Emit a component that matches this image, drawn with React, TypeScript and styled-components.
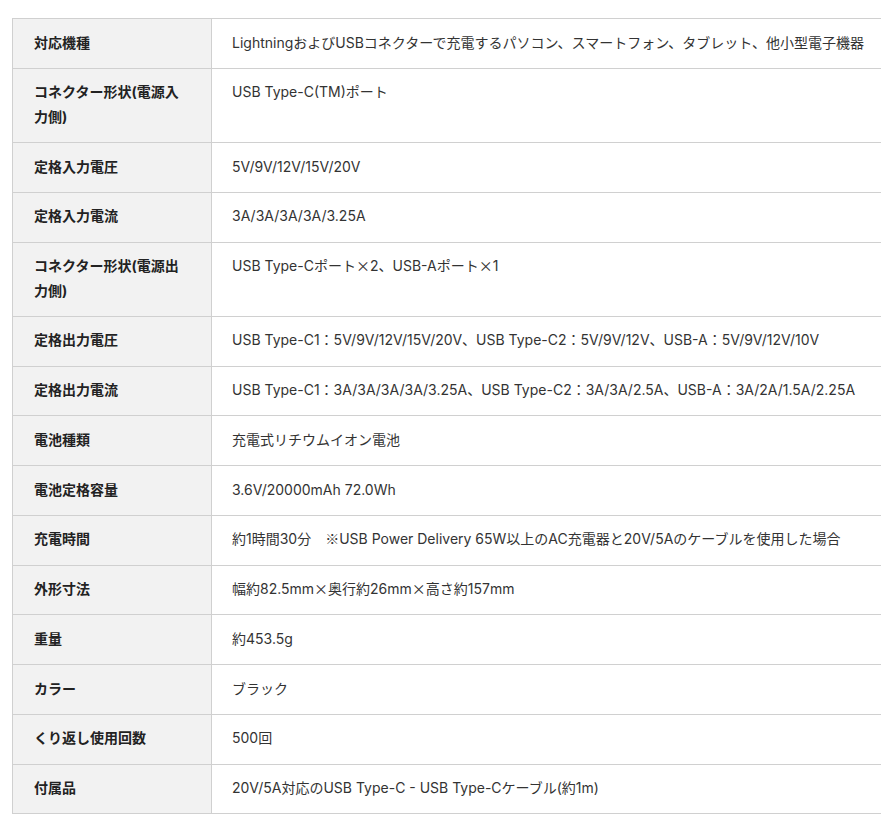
import React from "react";
import styled, { createGlobalStyle } from "styled-components";

const Global = createGlobalStyle`
  html, body { margin: 0; padding: 0; background: #fff; overflow: hidden; }
  body { font-family: Inter, "Noto Sans CJK JP", sans-serif; color: #333; }
`;

const Page = styled.div`
  padding: 18px 0 0 12px;
`;

const Table = styled.table`
  border-collapse: separate;
  border-spacing: 0;
  table-layout: fixed;
  width: 900px;
  border-top: 1px solid #d0d0d0;
  border-left: 1px solid #d0d0d0;
  font-size: 14px;
  line-height: 24.5px;
`;

const Th = styled.th`
  width: 157px;
  padding: 11.5px 20px 12.75px 21px;
  background: #f2f2f2;
  border-right: 1px solid #d0d0d0;
  border-bottom: 1px solid #d0d0d0;
  text-align: left;
  vertical-align: top;
  font-weight: 700;
  color: #222;
`;

const Td = styled.td`
  padding: 11.5px 20px 12.75px 20px;
  border-right: 1px solid #d0d0d0;
  border-bottom: 1px solid #d0d0d0;
  vertical-align: top;
  color: #333;
  white-space: nowrap;
`;

const Sym = styled.span`
  font-family: "Noto Sans CJK JP", sans-serif;
  line-height: 1;
`;

const rows: [string, string][] = [
  ["対応機種", "LightningおよびUSBコネクターで充電するパソコン、スマートフォン、タブレット、他小型電子機器"],
  ["コネクター形状(電源入力側)", "USB Type-C(TM)ポート"],
  ["定格入力電圧", "5V/9V/12V/15V/20V"],
  ["定格入力電流", "3A/3A/3A/3A/3.25A"],
  ["コネクター形状(電源出力側)", "USB Type-Cポート×2、USB-Aポート×1"],
  ["定格出力電圧", "USB Type-C1：5V/9V/12V/15V/20V、USB Type-C2：5V/9V/12V、USB-A：5V/9V/12V/10V"],
  ["定格出力電流", "USB Type-C1：3A/3A/3A/3A/3.25A、USB Type-C2：3A/3A/2.5A、USB-A：3A/2A/1.5A/2.25A"],
  ["電池種類", "充電式リチウムイオン電池"],
  ["電池定格容量", "3.6V/20000mAh 72.0Wh"],
  ["充電時間", "約1時間30分　※USB Power Delivery 65W以上のAC充電器と20V/5Aのケーブルを使用した場合"],
  ["外形寸法", "幅約82.5mm×奥行約26mm×高さ約157mm"],
  ["重量", "約453.5g"],
  ["カラー", "ブラック"],
  ["くり返し使用回数", "500回"],
  ["付属品", "20V/5A対応のUSB Type-C - USB Type-Cケーブル(約1m)"],
];

function renderValue(v: string) {
  return v.split(/([×※])/).map((part, i) =>
    part === "×" || part === "※" ? <Sym key={i}>{part}</Sym> : part
  );
}

export default function App() {
  return (
    <>
      <Global />
      <Page>
        <Table>
          <tbody>
            {rows.map(([k, v]) => (
              <tr key={k}>
                <Th>{k}</Th>
                <Td>{renderValue(v)}</Td>
              </tr>
            ))}
          </tbody>
        </Table>
      </Page>
    </>
  );
}
